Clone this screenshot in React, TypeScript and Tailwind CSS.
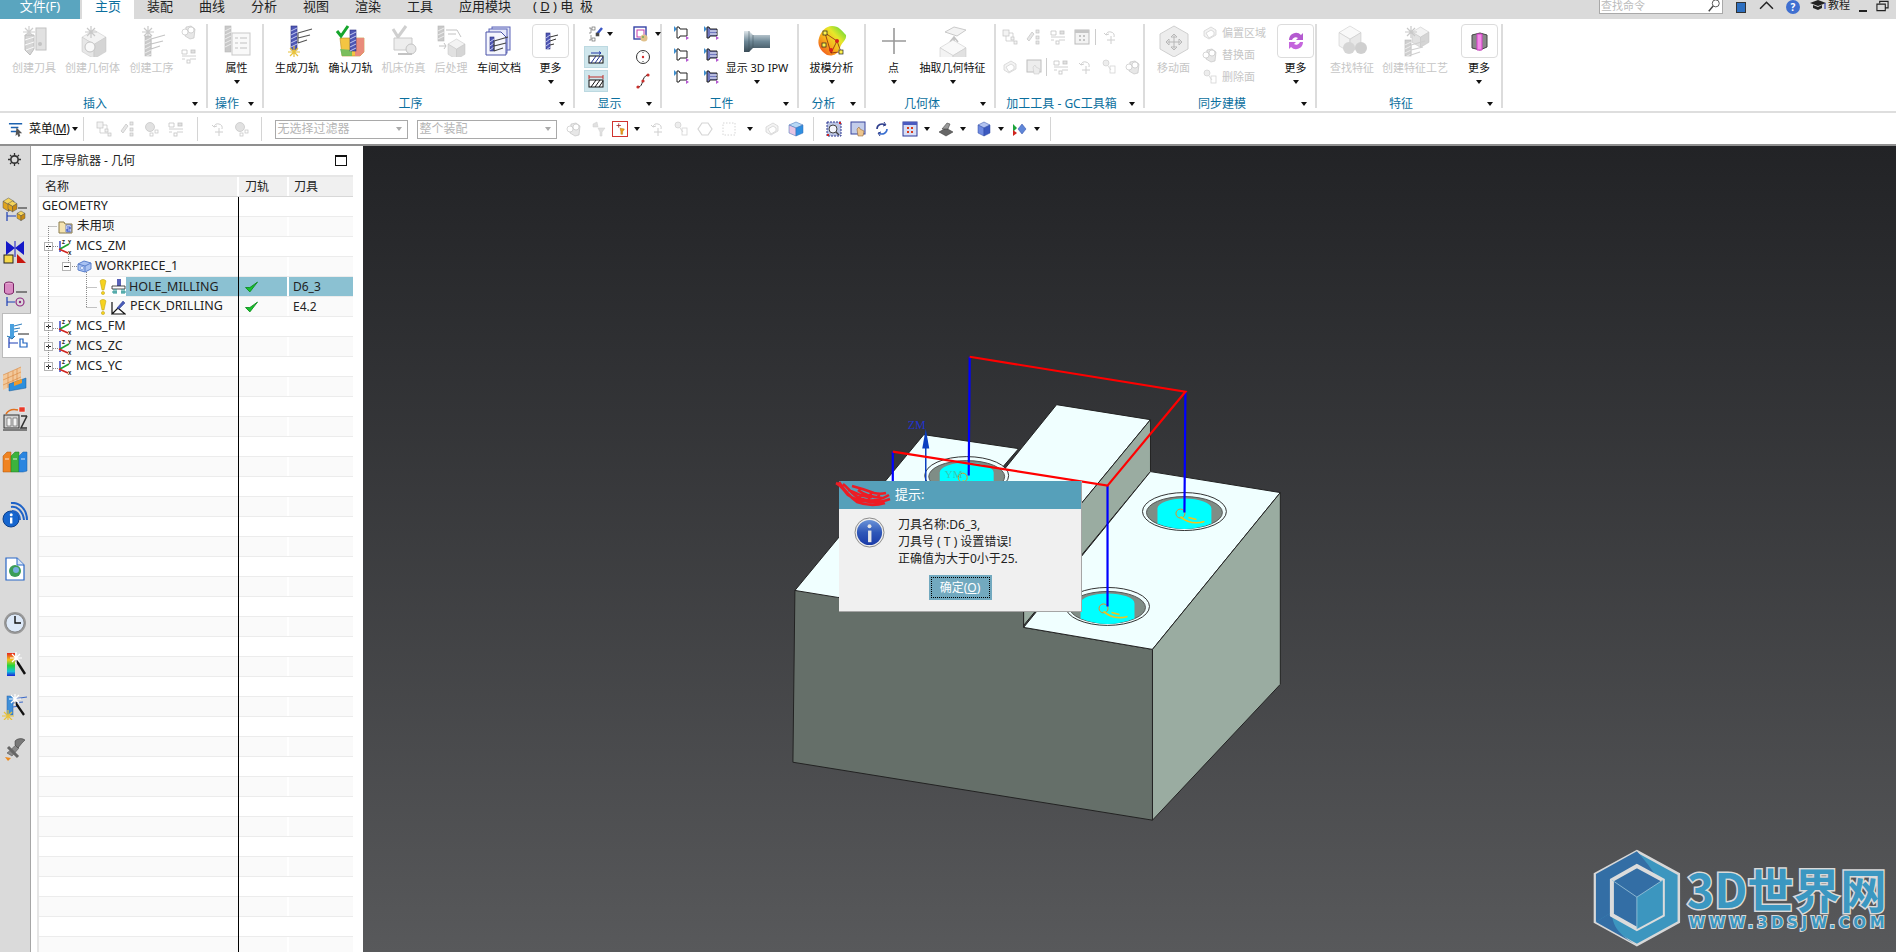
import React from "react";
import clsx from "clsx";

/* ---------- small drawing helpers ---------- */

const Tri = ({ className }: { className?: string }) => (
  <span className={clsx("inline-block w-0 h-0 border-x-[3.5px] border-x-transparent border-t-[4px] border-t-[#111]", className)} />
);

const Ico = ({ children, off, className, view = "0 0 32 32" }: { children: React.ReactNode; off?: boolean; className?: string; view?: string }) => (
  <svg viewBox={view} className={clsx(className ?? "w-[32px] h-[32px]", off && "opacity-35 grayscale")}>
    {children}
  </svg>
);

const Flute = ({ x, y, w = 6, h = 20, c = "#4f57b5" }: { x: number; y: number; w?: number; h?: number; c?: string }) => (
  <g>
    <rect x={x} y={y} width={w} height={h} fill={c} stroke="#2c3180" strokeWidth="0.6" />
    {[3, 7, 11, 15, 19].filter((d) => d < h).map((d) => (
      <path key={d} d={`M${x} ${y + d + 2}l${w} -3`} stroke="#cfd4f5" strokeWidth="0.9" />
    ))}
  </g>
);

const Wings = ({ x, y, c = "#555" }: { x: number; y: number; c?: string }) => (
  <path d={`M${x} ${y + 3}l14 -4M${x} ${y + 8}l12 -3M${x} ${y + 13}l9 -3M${x} ${y + 3}v10`} stroke={c} strokeWidth="1.1" fill="none" />
);

const Burst = ({ x, y, c = "#999" }: { x: number; y: number; c?: string }) => (
  <path d={`M${x} ${y - 6}v12M${x - 6} ${y}h12M${x - 4} ${y - 4}l8 8M${x - 4} ${y + 4}l8 -8`} stroke={c} strokeWidth="1.2" />
);

const Box = ({ x, y, s = 10, f = "#bbb", t = "#ddd", r = "#999" }: { x: number; y: number; s?: number; f?: string; t?: string; r?: string }) => (
  <g stroke="#555" strokeWidth="0.5">
    <path d={`M${x} ${y + s * 0.3}l${s * 0.5} -${s * 0.3}l${s * 0.5} ${s * 0.3}l-${s * 0.5} ${s * 0.3}z`} fill={t} />
    <path d={`M${x} ${y + s * 0.3}v${s * 0.6}l${s * 0.5} ${s * 0.3}v-${s * 0.6}z`} fill={f} />
    <path d={`M${x + s} ${y + s * 0.3}v${s * 0.6}l-${s * 0.5} ${s * 0.3}v-${s * 0.6}z`} fill={r} />
  </g>
);

const IcoCreateTool = () => (
  <Ico off>
    <Burst x={11} y={7} c="#777" />
    <path d="M7 10h9v14l-4 6-5-5z" fill="#888" stroke="#444" />
    <path d="M7 15l9-3M7 20l9-3M8 25l8-3" stroke="#eee" />
    <rect x="18" y="3" width="10" height="22" fill="#aaa" stroke="#555" />
    <circle cx="22" cy="19" r="2" fill="#555" />
  </Ico>
);
const IcoCreateGeom = () => (
  <Ico off>
    <Box x={5} y={5} s={24} f="#bbb" t="#ddd" r="#888" />
    <Burst x={14} y={7} c="#666" />
    <circle cx="13" cy="22" r="5" fill="#eee" stroke="#555" />
  </Ico>
);
const IcoCreateOp = () => (
  <Ico off>
    <Burst x={12} y={7} c="#666" />
    <Flute x={9} y={11} c="#666" />
    <Wings x={15} y={11} c="#555" />
  </Ico>
);
const IcoProps = () => (
  <Ico off>
    <Flute x={4} y={1} h={26} c="#666" />
    <rect x="11" y="8" width="18" height="22" fill="#eee" stroke="#666" />
    <path d="M14 13h3M19 13h7M14 18h3M19 18h7M14 23h3M19 23h7" stroke="#555" />
  </Ico>
);
const IcoGenerate = () => (
  <Ico>
    <Flute x={10} y={1} h={24} />
    <Wings x={17} y={5} c="#555" />
    <Burst x={13} y={27} c="#e8c23a" />
  </Ico>
);
const IcoVerify = () => (
  <Ico>
    <path d="M5 13h24v14l-4 4H7z" fill="#f4c542" stroke="#b98a1c" strokeWidth="0.6" />
    <path d="M20 13h9v14l-4 4h-5z" fill="#e98b7a" />
    <path d="M5 24l12 1v6H7z" fill="#5dbb63" opacity="0.8" />
    <Flute x={15} y={5} h={21} />
    <path d="M2 6l4 5 7-10" stroke="#16a52c" strokeWidth="3" fill="none" />
  </Ico>
);
const IcoMachine = () => (
  <Ico off>
    <path d="M5 4l5 8 8-11" stroke="#777" strokeWidth="3" fill="none" />
    <path d="M6 13h18v12H6z" fill="#ccc" stroke="#666" />
    <circle cx="23" cy="24" r="5" fill="#bbb" stroke="#555" />
    <path d="M10 29h14" stroke="#555" strokeWidth="2" />
  </Ico>
);
const IcoPost = () => (
  <Ico off>
    <Flute x={3} y={1} h={15} c="#666" />
    <path d="M11 5h11l4 7M13 9h8" stroke="#555" fill="none" />
    <path d="M4 21h7l-2-3M9 24l2-3" stroke="#555" fill="none" />
    <Box x={13} y={14} s={17} f="#aaa" t="#ddd" r="#888" />
  </Ico>
);
const IcoDocs = () => (
  <Ico>
    <rect x="9" y="2" width="18" height="23" fill="#dfe3f6" stroke="#5a63b8" />
    <rect x="6" y="4" width="18" height="24" fill="#e7eaf9" stroke="#5a63b8" />
    <path d="M3 7h15l5 5v18H3z" fill="#f5f6fd" stroke="#4a52a8" />
    <Flute x={7} y={12} w={4} h={14} />
    <Wings x={11} y={13} c="#444" />
  </Ico>
);
const IcoMoreMill = () => (
  <Ico>
    <Flute x={11} y={8} w={4} h={16} />
    <path d="M15 12l8-2M15 16l6-2M15 20l4-1" stroke="#333" />
  </Ico>
);
const IcoPurple = () => (
  <Ico>
    <path d="M9 15a7 7 0 0 1 12-5l2-2v7h-7l2-2a4 4 0 0 0-6 2z" fill="#b45ad0" />
    <path d="M23 17a7 7 0 0 1-12 5l-2 2v-7h7l-2 2a4 4 0 0 0 6-2z" fill="#c566dd" />
  </Ico>
);
const IcoPinkBox = () => (
  <Ico>
    <path d="M9 10l8-2 7 2v12l-7 3-8-2z" fill="#888" stroke="#444" />
    <path d="M14 9h5v16h-5z" fill="#f48ce8" stroke="#d13fc5" />
  </Ico>
);
const IcoIpw = () => (
  <Ico view="0 0 28 22" className="w-[28px] h-[22px]">
    <defs>
      <linearGradient id="steel" x1="0" y1="0" x2="0" y2="1">
        <stop offset="0" stopColor="#dfe6ea" />
        <stop offset="0.5" stopColor="#6d8796" />
        <stop offset="1" stopColor="#3a4c57" />
      </linearGradient>
    </defs>
    <path d="M1 1h5l4 4h17v13H10l-4 4H1z" fill="url(#steel)" />
    <path d="M6 1v21M10 5v13" stroke="#3a4c57" strokeWidth="0.5" />
  </Ico>
);
const IcoDraft = () => (
  <Ico view="0 0 32 32" className="w-[34px] h-[32px]">
    <defs>
      <linearGradient id="rainbow" x1="0" y1="1" x2="1" y2="0">
        <stop offset="0" stopColor="#f03a1e" />
        <stop offset="0.4" stopColor="#f7b21c" />
        <stop offset="0.65" stopColor="#e7e62a" />
        <stop offset="1" stopColor="#3ed43d" />
      </linearGradient>
    </defs>
    <path d="M16 1c7 0 9 4 14 9 1 5-5 8-6 13-3 8-9 8-13 7C4 26 1 19 3 13 5 6 10 1 16 1z" fill="url(#rainbow)" />
    <path d="M9 8l6 20M9 8l12 8-6 12M15 28l8-1M21 16l4 11" stroke="#7a1210" fill="none" strokeWidth="0.7" />
    <rect x="7" y="6" width="4" height="4" fill="#fff24d" stroke="#222" strokeWidth="0.7" />
    <rect x="6" y="18" width="4" height="4" fill="#fff24d" stroke="#222" strokeWidth="0.7" />
    <rect x="23" y="25" width="4" height="4" fill="#fff24d" stroke="#222" strokeWidth="0.7" />
    <circle cx="21" cy="16" r="2" fill="#d6221c" />
    <circle cx="15" cy="25" r="2" fill="#d6221c" />
  </Ico>
);
const IcoPoint = () => (
  <Ico>
    <path d="M16 3v26M4 16h24" stroke="#999" strokeWidth="1.6" />
  </Ico>
);
const IcoExtract = () => (
  <Ico off>
    <path d="M8 7l9-5 12 3-9 6z" fill="#ddd" stroke="#666" />
    <path d="M17 26V13M13 17l4-5 4 5" stroke="#555" strokeWidth="1.6" fill="none" />
    <Box x={3} y={15} s={26} f="#ddd" t="#eee" r="#aaa" />
  </Ico>
);
const IcoMoveFace = () => (
  <Ico off>
    <path d="M16 1l14 8v15l-14 8-14-8V9z" fill="#ccc" stroke="#777" />
    <path d="M16 9v16M8 17h16M16 9l-3 3h6zM16 25l-3-3h6zM8 17l3-3v6zM24 17l-3-3v6z" stroke="#333" fill="#fff" />
  </Ico>
);
const IcoFind = () => (
  <Ico off>
    <Box x={3} y={1} s={22} f="#ddd" t="#eee" r="#bbb" />
    <circle cx="13" cy="23" r="6" fill="#888" />
    <circle cx="25" cy="23" r="6" fill="#777" />
  </Ico>
);
const IcoFeatProc = () => (
  <Ico off>
    <Box x={13} y={2} s={17} f="#aaa" t="#ddd" r="#888" />
    <Burst x={12} y={7} c="#666" />
    <Flute x={6} y={15} h={16} c="#777" />
    <Wings x={12} y={17} c="#777" />
  </Ico>
);

const Small = ({ kind, off }: { kind: number; off?: boolean }) => (
  <Ico off={off} view="0 0 16 16" className="w-[16px] h-[16px]">
    {kind === 0 && (
      <g stroke="#555" fill="#ddd" strokeWidth="0.7">
        <rect x="1" y="1" width="6" height="6" />
        <rect x="9" y="8" width="3" height="3" />
        <rect x="12" y="12" width="3" height="3" />
        <path d="M4 7v5h8M7 4h4v4" fill="none" />
      </g>
    )}
    {kind === 1 && (
      <g stroke="#555" fill="#bbb" strokeWidth="0.7">
        <path d="M1 10l5-7 2 2-5 7z" />
        <rect x="10" y="1" width="3" height="3" />
        <rect x="10" y="7" width="3" height="3" />
        <rect x="10" y="12" width="3" height="3" />
      </g>
    )}
    {kind === 2 && (
      <g stroke="#555" fill="#aaa" strokeWidth="0.7">
        <circle cx="6" cy="6" r="4.5" />
        <rect x="11" y="9" width="3" height="3" fill="#fff" />
        <rect x="6" y="12" width="3" height="3" fill="#fff" />
      </g>
    )}
    {kind === 3 && (
      <g stroke="#555" fill="none" strokeWidth="0.8">
        <path d="M1 2h5v4H1zM1 8h14M1 11h3M9 11h6" />
        <rect x="10" y="2" width="4" height="3" fill="#aaa" />
        <rect x="6" y="12" width="3" height="3" />
      </g>
    )}
    {kind === 4 && (
      <g fill="#888" stroke="#444" strokeWidth="0.6">
        <path d="M5 3l5-1 4 3-1 9-4 1-5-3z" fill="#bbb" />
        <circle cx="4" cy="8" r="3" fill="#fff" />
        <circle cx="10" cy="6" r="3" fill="#fff" />
      </g>
    )}
    {kind === 5 && (
      <g>
        <path d="M7 1l1 5H3v-3zM8 7l7 0-3 4v4h-2v-4z" fill="#aaa" stroke="#777" strokeWidth="0.5" />
      </g>
    )}
    {kind === 6 && (
      <g>
        <path d="M8 7L13 8l-2 3v3H9v-3z" fill="#f2a21c" stroke="#a86a08" strokeWidth="0.5" />
        <path d="M4 4h5M6.500 1.500v5" stroke="#a33" strokeWidth="1" />
      </g>
    )}
    {kind === 7 && <path d="M4 6a4 4 0 0 1 8 2M4 6l-2-2M4 6l3-1M9 7v8M5 11h8" stroke="#777" fill="none" />}
    {kind === 8 && (
      <g stroke="#777" fill="#ccc" strokeWidth="0.7">
        <circle cx="5" cy="4" r="3" />
        <rect x="9" y="7" width="5" height="7" fill="none" />
        <path d="M7 7l3 4" />
      </g>
    )}
    {kind === 9 && <path d="M5 2h6l4 6-4 6H5L1 8z" fill="#fff" stroke="#888" strokeWidth="1.2" />}
    {kind === 10 && <rect x="2" y="2" width="12" height="12" fill="none" stroke="#888" strokeDasharray="1.5 1.5" />}
    {kind === 11 && (
      <g strokeWidth="0.7" stroke="#777">
        <path d="M2 6l7-4 5 3v5l-7 4-5-3z" fill="#ddd" />
        <path d="M4 8l5-3 3 2v3l-5 3z" fill="#fff" />
      </g>
    )}
    {kind === 12 && (
      <g stroke="#3b6db5" strokeWidth="0.5">
        <path d="M1 4l7-3 7 3-7 3z" fill="#b7d8f5" />
        <path d="M1 4v8l7 3V7z" fill="#e6c5e3" />
        <path d="M15 4v8l-7 3V7z" fill="#2f8fe0" />
      </g>
    )}
    {kind === 13 && (
      <g>
        <rect x="1" y="1" width="14" height="14" fill="#b9c3e2" stroke="#2b358f" strokeDasharray="2 1" />
        <circle cx="7" cy="8" r="4" fill="#f2f4fb" stroke="#444" />
        <path d="M10 11l3 3" stroke="#444" strokeWidth="1.4" />
        <rect x="13" y="1" width="2" height="2" fill="#d02020" />
        <rect x="1" y="13" width="2" height="2" fill="#d02020" />
      </g>
    )}
    {kind === 14 && (
      <g>
        <rect x="1" y="1" width="14" height="12" fill="#c3cdea" stroke="#39449c" />
        <path d="M7 8l1 7h5l1-5-4-2-1-2z" fill="#eec68d" stroke="#84562a" strokeWidth="0.5" />
      </g>
    )}
    {kind === 15 && (
      <g fill="none" strokeWidth="1.6">
        <path d="M3 8a5 5 0 0 1 8-4" stroke="#2e3e8c" />
        <path d="M13 8a5 5 0 0 1-8 4" stroke="#3a6fd0" />
        <path d="M10 1l2 3-3 1M6 15l-2-3 3-1" stroke="#2e3e8c" strokeWidth="1" />
      </g>
    )}
    {kind === 16 && (
      <g>
        <rect x="1" y="1" width="14" height="14" fill="#d8def5" stroke="#2d3a9a" />
        <rect x="1" y="1" width="14" height="3" fill="#4a5ac0" />
        <path d="M5 6h2v2H5zM9 6h2v2H9zM5 10h2v2H5zM9 10h2v2H9z" fill="#d93a1a" />
      </g>
    )}
    {kind === 17 && (
      <g stroke="#333" strokeWidth="0.5">
        <path d="M1 11l7-4 7 4-7 4z" fill="#666" />
        <path d="M4 8l5-6 3 1-2 5z" fill="#999" />
      </g>
    )}
    {kind === 18 && (
      <g stroke="#2c4aa5" strokeWidth="0.5">
        <path d="M2 4l6-3 6 3-6 3z" fill="#b3c3f0" />
        <path d="M2 4v8l6 3V7z" fill="#6f8ae0" />
        <path d="M14 4v8l-6 3V7z" fill="#3c59c0" />
      </g>
    )}
    {kind === 19 && (
      <g>
        <path d="M7 8l4-5 4 5-4 5z" fill="#5f86d8" stroke="#2c4aa5" strokeWidth="0.5" />
        <path d="M2 3l4 4-4 4z" fill="#1da33a" />
        <path d="M2 9l4 3-4 3z" fill="#d0231d" />
      </g>
    )}
    {kind === 20 && (
      <g stroke="#555" strokeWidth="0.6" fill="none">
        <path d="M1 7h2M1 2h2v5M1 14h2V9" />
        <rect x="4" y="1" width="3" height="3" />
        <rect x="4" y="12" width="3" height="3" />
        <path d="M9 8l5-6" stroke="#3b57c5" strokeWidth="2.5" />
        <rect x="8" y="7" width="3" height="3" fill="#444" />
      </g>
    )}
    {kind === 21 && (
      <g>
        <rect x="1" y="1" width="12" height="12" fill="#fff" stroke="#3542a6" strokeWidth="1.4" />
        <rect x="4" y="4" width="7" height="7" fill="#fff" stroke="#c63ca8" />
        <circle cx="11" cy="12" r="3.500" fill="#e0c08a" />
        <circle cx="10" cy="11" r="0.8" fill="#2a9a3a" />
      </g>
    )}
    {kind === 22 && (
      <g>
        <circle cx="8" cy="8" r="6.500" fill="#fff" stroke="#333" />
        <circle cx="8" cy="8" r="1.2" fill="#cf2a2a" />
        <path d="M8 3v1M8 12v1" stroke="#333" />
      </g>
    )}
    {kind === 23 && (
      <g>
        <path d="M3 14c6 0 3-11 10-12" stroke="#222" fill="none" />
        <circle cx="3" cy="14" r="1.6" fill="#c9302c" />
        <circle cx="13" cy="2" r="1.6" fill="#c9302c" />
        <circle cx="8" cy="8" r="1.6" fill="#c9302c" />
      </g>
    )}
  </Ico>
);

const ArrowBlank = ({ filled }: { filled?: boolean }) => (
  <Ico view="0 0 18 18" className="w-[18px] h-[18px]">
    <path d="M1 2l3 3-3 3z" fill="#3f8fd0" />
    <path d="M4 3h2l1 2h7v7H7l-1 2H4z" fill={filled ? "#7078c0" : "#fff"} stroke="#222" strokeWidth="1" />
    {filled && <path d="M7 7h7M7 10h7" stroke="#fff" />}
    <path d="M13 12l3 2-3 2z" fill="#b45ad0" />
  </Ico>
);

const Tool = ({ kind, off, className }: { kind: number; off?: boolean; className?: string }) => (
  <span className={clsx("flex w-[24px] justify-center", className)}>
    <Small kind={kind} off={off} />
  </span>
);

/* ---------- ribbon ---------- */

const Group = ({ title, width, children, noTri }: { title: string; width: string; children: React.ReactNode; noTri?: boolean }) => (
  <div className={clsx("flex flex-col mt-[5px] h-[84px] border-r-2 border-[#dcdcdc] shrink-0", width)}>
    <div className="relative flex flex-1">{children}</div>
    <div className="flex h-[13px] items-center translate-y-[2px]">
      <span className="flex-1 text-center text-[12px] leading-[14px] text-[#0b6f9e]">{title}</span>
      <span className="flex w-[10px] mr-[6px] justify-center">{!noTri && <Tri />}</span>
    </div>
  </div>
);

const Btn = ({ label, icon, width, off, arrow, boxed }: { label: string; icon: React.ReactNode; width: string; off?: boolean; arrow?: boolean; boxed?: boolean }) => (
  <div className={clsx("flex flex-col items-center shrink-0", width)}>
    <div className={clsx("flex h-[34px] items-center justify-center", boxed && "w-[37px] rounded-[4px] border border-[#dcdcdc]")}>{icon}</div>
    <span className={clsx("mt-[1px] h-[18px] whitespace-nowrap text-[11px] leading-[18px]", off ? "text-[#c6c6c6]" : "text-[#111]")}>{label}</span>
    {arrow && <Tri className="mt-[3px]" />}
  </div>
);

const MiniLabel = ({ kind, label }: { kind: number; label: string }) => (
  <div className="flex h-[22px] items-center gap-[4px]">
    <Small kind={kind} off />
    <span className="text-[11px] leading-[14px] text-[#c6c6c6]">{label}</span>
  </div>
);

const Ribbon = () => (
  <div className="flex h-[94px] bg-white border-b-2 border-[#dedede]">
    <Group title="插入" width="w-[208px]">
      <Btn width="w-[63px] pl-[5px]" label="创建刀具" off icon={<IcoCreateTool />} />
      <Btn width="w-[59px]" label="创建几何体" off icon={<IcoCreateGeom />} />
      <Btn width="w-[59px]" label="创建工序" off icon={<IcoCreateOp />} />
      <div className="flex flex-col gap-[8px] w-[20px]">
        <Small kind={4} off />
        <Small kind={3} off />
      </div>
    </Group>
    <Group title="操作" width="w-[56px]">
      <Btn width="w-full pl-[3px]" label="属性" arrow icon={<IcoProps />} />
    </Group>
    <Group title="工序" width="w-[311px]">
      <Btn width="w-[54px] ml-[6px]" label="生成刀轨" icon={<IcoGenerate />} />
      <Btn width="w-[53px]" label="确认刀轨" icon={<IcoVerify />} />
      <Btn width="w-[53px]" label="机床仿真" off icon={<IcoMachine />} />
      <Btn width="w-[42px]" label="后处理" off icon={<IcoPost />} />
      <Btn width="w-[54px]" label="车间文档" icon={<IcoDocs />} />
      <Btn width="w-[49px]" label="更多" arrow boxed icon={<IcoMoreMill />} />
    </Group>
    <Group title="显示" width="w-[87px]">
      <div className="grid grid-cols-[41px_38px] pl-[9px]">
        <div className="flex h-[19px] items-center gap-[3px] pl-[4px]">
          <Small kind={20} />
          <Tri />
        </div>
        <div className="flex h-[19px] items-center gap-[6px] pl-[8px]">
          <Small kind={21} />
          <Tri />
        </div>
        <div className="flex h-[22px] w-[24px] items-center justify-center bg-[#cfe6ec] border border-[#bcd9e1]">
          <Ico view="0 0 16 16" className="w-[16px] h-[16px]">
            <path d="M3 4h10M11 2.500L13 4l-2 1.500" stroke="#2238a8" fill="none" />
            <rect x="1" y="7" width="14" height="7" fill="#fff" stroke="#111" />
            <path d="M3 14l5-7M7 14l5-7M11 14l4-6" stroke="#1f2f8c" />
          </Ico>
        </div>
        <div className="flex h-[22px] items-center pl-[10px]">
          <Small kind={22} />
        </div>
        <div className="flex h-[22px] w-[24px] items-center justify-center bg-[#cfe6ec] border border-[#bcd9e1]">
          <Ico view="0 0 16 16" className="w-[16px] h-[16px]">
            <path d="M1 2v4M15 2v4M1 4h14" stroke="#c0302c" />
            <rect x="1" y="7" width="14" height="7" fill="#fff" stroke="#111" />
            <path d="M3 14l5-7M7 14l5-7M11 14l4-6" stroke="#111" />
          </Ico>
        </div>
        <div className="flex h-[22px] items-center pl-[10px]">
          <Small kind={23} />
        </div>
      </div>
    </Group>
    <Group title="工件" width="w-[137px]">
      <div className="grid grid-cols-2 gap-x-[9px] gap-y-[3px] pl-[11px] h-[63px] w-[62px] shrink-0">
        <ArrowBlank />
        <ArrowBlank filled />
        <ArrowBlank />
        <ArrowBlank filled />
        <ArrowBlank />
        <ArrowBlank filled />
      </div>
      <Btn width="w-[66px]" label="显示 3D IPW" arrow icon={<IcoIpw />} />
    </Group>
    <Group title="分析" width="w-[67px]">
      <Btn width="w-full" label="拔模分析" arrow icon={<IcoDraft />} />
    </Group>
    <Group title="几何体" width="w-[130px]">
      <Btn width="w-[55px]" label="点" arrow icon={<IcoPoint />} />
      <Btn width="w-[63px]" label="抽取几何特征" arrow icon={<IcoExtract />} />
    </Group>
    <Group title="加工工具 - GC工具箱" width="w-[149px]">
      <div className="flex flex-col pl-[2px] pt-[3px] gap-[10px]">
        <div className="flex h-[20px] items-center">
          <Tool kind={0} off />
          <Tool kind={1} off />
          <Tool kind={3} off />
          <Tool kind={16} off />
          <span className="ml-[1px] h-[16px] border-l border-[#ccc]" />
          <Tool kind={7} off className="w-[28px]" />
        </div>
        <div className="flex h-[20px] items-center">
          <Tool kind={11} off />
          <Tool kind={14} off />
          <span className="h-[18px] border-l border-[#ccc]" />
          <Tool kind={3} off className="ml-[2px]" />
          <Tool kind={7} off />
          <Tool kind={8} off />
          <Tool kind={4} off />
        </div>
      </div>
    </Group>
    <Group title="同步建模" width="w-[172px]">
      <Btn width="w-[57px]" label="移动面" off icon={<IcoMoveFace />} />
      <div className="flex flex-col w-[75px] -mt-[2px]">
        <MiniLabel kind={11} label="偏置区域" />
        <MiniLabel kind={4} label="替换面" />
        <MiniLabel kind={8} label="删除面" />
      </div>
      <Btn width="w-[39px]" label="更多" arrow boxed icon={<IcoPurple />} />
    </Group>
    <Group title="特征" width="w-[186px]">
      <Btn width="w-[56px] ml-[7px]" label="查找特征" off icon={<IcoFind />} />
      <Btn width="w-[70px]" label="创建特征工艺" off icon={<IcoFeatProc />} />
      <Btn width="w-[38px] ml-[10px]" label="更多" arrow boxed icon={<IcoPinkBox />} />
    </Group>
  </div>
);

/* ---------- top bar ---------- */

const tabs = ["装配", "曲线", "分析", "视图", "渲染", "工具"];

const TopBar = () => (
  <div className="flex h-[19px] bg-[#dadada] overflow-hidden text-[13px] leading-[13px] text-[#222]">
    <div className="flex h-full w-[80px] justify-center bg-[#5aa5bf] text-white">文件(F)</div>
    <div className="ml-[2px] flex h-full w-[52px] justify-center bg-white text-[#0b6f9e]">主页</div>
    {tabs.map((t) => (
      <div key={t} className="flex w-[52px] justify-center">{t}</div>
    ))}
    <div className="flex w-[78px] justify-center">应用模块</div>
    <div className="flex w-[78px] justify-center whitespace-pre">( <u>D</u> ) 电  极</div>
    <div className="ml-auto flex items-start">
      <div className="flex h-[14px] w-[124px] items-start justify-between border border-t-0 border-[#a9a9a9] bg-white px-[1px] text-[11px] leading-[11px] text-[#bbb]">
        查找命令
        <Ico view="0 0 16 16" className="w-[14px] h-[14px] -mt-[1px]">
          <circle cx="10" cy="5" r="4" fill="none" stroke="#444" />
          <path d="M7 8l-5 6" stroke="#444" strokeWidth="1.6" />
        </Ico>
      </div>
      <div className="ml-[10px] flex h-[14px] w-[16px] items-center justify-center">
        <span className="h-[11px] w-[10px] border border-[#333] bg-[#2d6fc0]" />
      </div>
      <Ico view="0 0 14 10" className="ml-[10px] w-[15px] h-[11px]">
        <path d="M1 8l6-6 6 6" fill="none" stroke="#222" strokeWidth="1.4" />
      </Ico>
      <span className="ml-[12px] flex h-[14px] w-[14px] items-center justify-center rounded-full bg-[#3f6fd0] text-[10px] leading-[13px] font-bold text-white">?</span>
      <Ico view="0 0 16 10" className="ml-[10px] w-[16px] h-[10px]">
        <path d="M0 3l8-3 8 3-8 3z" fill="#222" />
        <path d="M3 5v3l5 2 4-2V5l-4 2z" fill="#222" />
        <path d="M15 3v6" stroke="#1f2fb0" />
      </Ico>
      <span className="ml-[2px] text-[11px] leading-[10px]">教程</span>
      <span className="ml-[9px] mt-[10px] h-[2px] w-[8px] bg-[#222]" />
      <Ico view="0 0 14 12" className="ml-[9px] mr-[7px] w-[13px] h-[12px]">
        <path d="M4 3V1h9v7h-3M1 4h9v7H1z" fill="none" stroke="#222" strokeWidth="1.2" />
      </Ico>
    </div>
  </div>
);

/* ---------- toolbar under the ribbon ---------- */

const Sep = ({ className }: { className?: string }) => <span className={clsx("h-[24px] border-l border-[#d4d4d4]", className)} />;

const Combo = ({ text, width, className }: { text: string; width: string; className?: string }) => (
  <div className={clsx("flex h-[19px] items-center justify-between border border-[#a9a9a9] px-[2px] text-[12px] text-[#b5b5b5]", width, className)}>
    {text}
    <Tri className="mr-[3px] border-t-[#aaa]" />
  </div>
);

const Toolbar = () => (
  <div className="flex h-[31px] items-center bg-white pt-[1px]">
    <Ico view="0 0 18 18" className="ml-[8px] w-[17px] h-[17px]">
      <path d="M1 3h14M3 7h8M3 11h8" stroke="#1d62b0" strokeWidth="1.6" />
      <path d="M9 7l6 6-3 0 1 3-2 1-1-3-2 2z" fill="#555" />
    </Ico>
    <span className="ml-[4px] text-[12px] tracking-[-0.3px] text-[#111]">菜单(<u>M</u>)</span>
    <Tri className="ml-[2px]" />
    <Sep className="ml-[5px]" />
    <Tool kind={0} off className="ml-[8px]" />
    <Tool kind={1} off />
    <Tool kind={2} off />
    <Tool kind={3} off />
    <Sep className="ml-[9px]" />
    <Tool kind={7} off className="ml-[8px]" />
    <Tool kind={2} off />
    <Sep className="ml-[7px]" />
    <Combo text="无选择过滤器" width="w-[133px]" className="ml-[13px]" />
    <Combo text="整个装配" width="w-[140px]" className="ml-[9px]" />
    <Tool kind={4} off className="ml-[5px]" />
    <Tool kind={5} off />
    <span className="flex w-[20px] justify-center">
      <span className="flex h-[16px] w-[16px] items-center justify-center border border-[#d0332f]">
        <Small kind={6} />
      </span>
    </span>
    <Tri className="ml-[4px]" />
    <Tool kind={7} off className="ml-[5px]" />
    <Tool kind={8} off />
    <Tool kind={9} off />
    <Tool kind={10} off />
    <Tri className="ml-[6px]" />
    <Tool kind={11} off className="ml-[7px]" />
    <Tool kind={12} />
    <Sep className="ml-[5px]" />
    <Tool kind={13} className="ml-[8px]" />
    <Tool kind={14} />
    <Tool kind={15} />
    <Tool kind={16} className="ml-[4px]" />
    <Tri className="ml-[2px]" />
    <Tool kind={17} className="ml-[4px]" />
    <Tri className="ml-[2px]" />
    <Tool kind={18} className="ml-[6px]" />
    <Tri className="ml-[2px]" />
    <Tool kind={19} className="ml-[3px]" />
    <Tri className="ml-[3px]" />
    <Sep className="ml-[10px]" />
  </div>
);

/* ---------- left rail ---------- */

const RailIcon = ({ n }: { n: number }) => (
  <Ico view="0 0 26 26" className="w-[26px] h-[26px]">
    {n === 0 && (
      <g>
        <Box x={1} y={1} s={11} f="#e0a41c" t="#f5d45a" r="#c98a10" />
        <Box x={6} y={4} s={9} f="#e0a41c" t="#f5d45a" r="#c98a10" />
        <Box x={15} y={14} s={8} f="#e0a41c" t="#f5d45a" r="#c98a10" />
        <path d="M5 15v9M5 19h9" stroke="#1d3fb5" strokeWidth="1.2" />
        <path d="M16 11h9" stroke="#222" />
      </g>
    )}
    {n === 1 && (
      <g>
        <path d="M4 3l9 7-9 7zM22 3l-9 7 9 7z" fill="#1518c8" />
        <path d="M13 3v16" stroke="#1518c8" />
        <rect x="2" y="17" width="9" height="8" fill="#f6d94a" stroke="#222" />
        <path d="M15 25v-9l9 9z" fill="#c8170f" />
      </g>
    )}
    {n === 2 && (
      <g>
        <ellipse cx="7" cy="3" rx="4.500" ry="2" fill="#e6a8d0" stroke="#7a2566" />
        <path d="M2.500 3v8c0 3 9 3 9 0V3" fill="#d88ac2" stroke="#7a2566" />
        <path d="M14 11h11" stroke="#222" />
        <path d="M5 16v9M5 21h8" stroke="#1d3fb5" strokeWidth="1.2" />
        <circle cx="18" cy="21" r="4" fill="none" stroke="#8e2a82" strokeWidth="1.2" />
        <circle cx="18" cy="21" r="1.2" fill="#8e2a82" />
      </g>
    )}
    {n === 3 && (
      <g>
        <rect x="6" y="1" width="4" height="12" fill="#4aa1e0" />
        <path d="M3 13l5 3 3-3" fill="#4aa1e0" stroke="#2a6ea8" />
        <path d="M10 3l8-2M10 6l6-1M10 9l4-1" stroke="#2d7dbd" />
        <path d="M14 11h11" stroke="#222" />
        <path d="M5 15v10M5 20h9" stroke="#1d3fb5" strokeWidth="1.2" />
        <path d="M16 16h3v4h4v4h-7z" fill="none" stroke="#1d62c0" strokeWidth="1.2" />
      </g>
    )}
    {n === 4 && (
      <g>
        <path d="M1 9l18-8v14L1 24z" fill="#f2c89a" />
        <path d="M1 9l18-8M1 14l18-8M1 19l18-8M6 7v15M11 5v15M15 3v15" stroke="#d8843a" strokeWidth="0.6" />
        <path d="M7 18l17-6v10l-17 3z" fill="#2d8fdc" stroke="#185a96" strokeWidth="0.5" />
        <path d="M12 16l8-3v4l-8 3z" fill="#f09a2a" />
      </g>
    )}
    {n === 5 && (
      <g>
        <rect x="2" y="9" width="15" height="13" fill="#d0d0d0" stroke="#333" />
        <path d="M5 12h4v8H5zM11 12h4v8h-4z" fill="#f4f4f4" stroke="#555" strokeWidth="0.6" />
        <path d="M4 8c3-5 8-5 12-4" stroke="#e0701c" strokeWidth="1.5" fill="none" />
        <rect x="17" y="1" width="6" height="5" fill="#e83a2a" stroke="#fff" strokeWidth="0.5" />
        <path d="M19 10h6M25 10l-6 12h6" stroke="#333" strokeWidth="1.6" fill="none" />
        <path d="M1 24h24" stroke="#555" strokeWidth="1.4" />
      </g>
    )}
    {n === 6 && (
      <g>
        <path d="M1 7l4-4h4v20H1z" fill="#ef8321" stroke="#a9560f" strokeWidth="0.5" />
        <path d="M9 7l4-4h4v20H9z" fill="#3cb33c" stroke="#1c7a1c" strokeWidth="0.5" />
        <path d="M17 7l4-4h4v19l-4 1h-4z" fill="#2a85e0" stroke="#155ca5" strokeWidth="0.5" />
        <path d="M3 10h4M11 10h4M19 10h4" stroke="#fff" strokeWidth="0.8" />
      </g>
    )}
    {n === 7 && (
      <g>
        <circle cx="9" cy="17" r="8" fill="#1666cf" stroke="#0d3f88" />
        <rect x="8" y="15.500" width="2.400" height="6" fill="#fff" />
        <circle cx="9.200" cy="12.800" r="1.500" fill="#fff" />
        <path d="M9 5c6-1 12 4 13 13M9 1c9-1 16 7 16 17M10 9c5 0 8 4 8 9" fill="none" stroke="#1f63c7" strokeWidth="2" />
      </g>
    )}
    {n === 8 && (
      <g>
        <path d="M4 2h11l7 7v15H4z" fill="#fff" stroke="#2966c5" strokeWidth="1.2" />
        <path d="M15 2v7h7" fill="#d9e6f7" stroke="#2966c5" />
        <circle cx="13" cy="15" r="6" fill="#3b9d58" />
        <circle cx="14" cy="14" r="3" fill="#76aee0" />
      </g>
    )}
    {n === 9 && (
      <g>
        <circle cx="13" cy="13" r="11" fill="#9a9a9a" />
        <circle cx="13" cy="13" r="9" fill="#dde9f8" stroke="#666" strokeWidth="0.6" />
        <path d="M13 6v7h6" stroke="#111" strokeWidth="1.4" fill="none" />
      </g>
    )}
    {n === 10 && (
      <g>
        <defs>
          <linearGradient id="spec" x1="0" y1="0" x2="0" y2="1">
            <stop offset="0" stopColor="#e6261f" />
            <stop offset="0.3" stopColor="#f2c41f" />
            <stop offset="0.55" stopColor="#22d63a" />
            <stop offset="0.8" stopColor="#16c2d8" />
            <stop offset="1" stopColor="#1a22d8" />
          </linearGradient>
        </defs>
        <rect x="5" y="1" width="8" height="23" fill="url(#spec)" />
        <path d="M14 8l9 14" stroke="#111" strokeWidth="2.400" />
        <Burst x={14} y={6} c="#fff" />
      </g>
    )}
    {n === 11 && (
      <g>
        <rect x="5" y="2" width="6" height="19" fill="#3f8fd8" stroke="#2a60a8" strokeWidth="0.5" />
        <path d="M11 5l14-2M11 9l10-1M11 13l6-1" stroke="#3a68c8" strokeWidth="1.2" />
        <Burst x={6} y={22} c="#e8c23a" />
        <path d="M13 8l9 13" stroke="#111" strokeWidth="2.200" />
        <Burst x={13} y={5} c="#fff" />
      </g>
    )}
    {n === 12 && (
      <g>
        <path d="M5 17c3-2 6-6 9-8l3 3-7 8z" fill="#888" stroke="#444" strokeWidth="0.5" />
        <path d="M13 5c3-3 7-3 10-1l-3 3-4 5-3-3z" fill="#777" stroke="#333" strokeWidth="0.5" />
        <path d="M6 11l10 10" stroke="#666" strokeWidth="3" />
        <path d="M3 21l6 1-3 3z" fill="#ee8a1c" />
      </g>
    )}
  </Ico>
);

const railItems = [
  { n: 0, cls: "mt-[21px] h-[34px]" },
  { n: 1, cls: "mt-[7px] h-[34px]" },
  { n: 2, cls: "mt-[9px] h-[34px]" },
  { n: 3, cls: "mt-[2px] h-[45px] ml-[2px] -mr-[1px] z-10 bg-white border border-r-0 border-[#bbb] relative" },
  { n: 4, cls: "mt-[4px] h-[34px]" },
  { n: 5, cls: "mt-[6px] h-[34px]" },
  { n: 6, cls: "mt-[9px] h-[34px]" },
  { n: 7, cls: "mt-[19px] h-[34px]" },
  { n: 8, cls: "mt-[20px] h-[34px]" },
  { n: 9, cls: "mt-[20px] h-[34px]" },
  { n: 10, cls: "mt-[8px] h-[34px]" },
  { n: 11, cls: "mt-[8px] h-[34px]" },
  { n: 12, cls: "mt-[8px] h-[34px]" },
];

const Rail = () => (
  <div className="flex w-[31px] shrink-0 flex-col bg-[#dadada] border-r border-[#a6a6a6]">
    <div className="flex h-[26px] items-center justify-center -translate-x-[1px]">
      <Ico view="0 0 16 16" className="w-[13px] h-[13px]">
        <circle cx="8" cy="8" r="4.500" fill="none" stroke="#333" strokeWidth="2" />
        <path d="M8 0v3M8 13v3M0 8h3M13 8h3M2.500 2.500l2 2M11.500 11.500l2 2M2.500 13.500l2-2M11.500 4.500l2-2" stroke="#333" strokeWidth="1.6" />
      </Ico>
    </div>
    {railItems.map((it) => (
      <div key={it.n} className={clsx("flex items-center justify-center shrink-0", it.cls)}>
        <RailIcon n={it.n} />
      </div>
    ))}
  </div>
);

/* ---------- operation navigator ---------- */

const Csys = () => (
  <Ico view="0 0 16 16" className="w-[16px] h-[16px] shrink-0">
    <path d="M3 13V2" stroke="#1d2fc0" strokeWidth="1.3" />
    <path d="M3 10l9-5" stroke="#1fa32c" strokeWidth="1.6" />
    <path d="M2 10l9 4" stroke="#d0231d" strokeWidth="1.6" />
    <text x="5" y="5" fontSize="5" fontWeight="700" fill="#222">Z</text>
    <text x="11" y="5" fontSize="5" fontWeight="700" fill="#222">Y</text>
    <text x="11" y="16" fontSize="5" fontWeight="700" fill="#222">X</text>
  </Ico>
);

const Sign = ({ plus }: { plus?: boolean }) => (
  <span className="relative block h-[9px] w-[9px] shrink-0 border border-[#b4b4b4] bg-white">
    <span className="absolute left-[1px] top-[3px] h-[1px] w-[5px] bg-[#222]" />
    {plus && <span className="absolute left-[3px] top-[1px] h-[5px] w-[1px] bg-[#222]" />}
  </span>
);

const Bulb = () => (
  <Ico view="0 0 10 16" className="w-[10px] h-[16px] shrink-0">
    <path d="M2 2c1-2 5-2 6 0l-2 9H4z" fill="#f6d21f" stroke="#b59a10" strokeWidth="0.5" />
    <circle cx="5" cy="14" r="1.600" fill="#f6d21f" stroke="#b59a10" strokeWidth="0.5" />
  </Ico>
);

const Check = () => (
  <Ico view="0 0 13 11" className="w-[15px] h-[12px]">
    <path d="M1 6l4 4 7-9-7 5z" fill="#18c12e" stroke="#0d8c1e" strokeWidth="0.8" />
  </Ico>
);

const Folder = () => (
  <Ico view="0 0 15 14" className="w-[15px] h-[14px] shrink-0">
    <path d="M1 2h5l1 2h7v9H1z" fill="#f4e3b0" stroke="#8a7b4a" />
    <path d="M8 5h5v7H8z" fill="#fff" stroke="#1d3fc0" strokeWidth="0.6" />
    <path d="M9 7h3M12 7v2H9v2h3" stroke="#1d3fc0" fill="none" />
  </Ico>
);

const Workpiece = () => (
  <Ico view="0 0 15 13" className="w-[15px] h-[13px] shrink-0">
    <path d="M1 4l6-3 7 2v6l-6 3-7-2z" fill="#a9c2f2" stroke="#5a80cc" />
    <path d="M1 4l7 2 6-3M8 6v6" stroke="#5a80cc" fill="none" />
    <circle cx="5" cy="8" r="1.600" fill="#e8effd" stroke="#5a80cc" strokeWidth="0.5" />
  </Ico>
);

const HoleOp = () => (
  <Ico view="0 0 15 16" className="w-[15px] h-[16px] shrink-0">
    <rect x="6" y="0" width="4" height="8" fill="#5a63b8" />
    <path d="M1 7h13v3H1z" fill="#fff" stroke="#222" strokeWidth="0.8" />
    <path d="M3 10v5M5 10v5M11 10v5M13 10v5M1 13h5M10 13h5" stroke="#1c8f8f" />
  </Ico>
);

const PeckOp = () => (
  <Ico view="0 0 15 16" className="w-[15px] h-[16px] shrink-0">
    <path d="M1 15V3M1 15l6-6 7 6z" fill="#fff" stroke="#111" strokeWidth="1.2" />
    <path d="M6 9l6-7 2 2-6 6z" fill="#4a5cb8" stroke="#2a3a8a" strokeWidth="0.5" />
  </Ico>
);

type Row = { label?: string; pad?: string; lead?: React.ReactNode; gap?: string; sel?: boolean; tool?: string; done?: boolean };

const named: Row[] = [
  { label: "GEOMETRY", pad: "pl-[3px]" },
  { label: "未用项", pad: "pl-[19px]", lead: <Folder />, gap: "ml-[4px]" },
  { label: "MCS_ZM", pad: "pl-[5px]", lead: <><Sign /><span className="ml-[4px]"><Csys /></span></>, gap: "ml-[3px]" },
  { label: "WORKPIECE_1", pad: "pl-[23px]", lead: <><Sign /><span className="ml-[6px]"><Workpiece /></span></>, gap: "ml-[3px]" },
  { label: "HOLE_MILLING", pad: "pl-[59px]", lead: <><Bulb /><span className="ml-[3px]"><HoleOp /></span></>, sel: true, tool: "D6_3", done: true },
  { label: "PECK_DRILLING", pad: "pl-[59px]", lead: <><Bulb /><span className="ml-[3px]"><PeckOp /></span></>, gap: "ml-[4px]", tool: "E4.2", done: true },
  { label: "MCS_FM", pad: "pl-[5px]", lead: <><Sign plus /><span className="ml-[4px]"><Csys /></span></>, gap: "ml-[3px]" },
  { label: "MCS_ZC", pad: "pl-[5px]", lead: <><Sign plus /><span className="ml-[4px]"><Csys /></span></>, gap: "ml-[3px]" },
  { label: "MCS_YC", pad: "pl-[5px]", lead: <><Sign plus /><span className="ml-[4px]"><Csys /></span></>, gap: "ml-[3px]" },
];
const rows: Row[] = [...named, ...Array.from({ length: 30 }, () => ({}))];

const Navigator = () => (
  <div className="flex w-[332px] shrink-0 flex-col bg-white overflow-hidden">
    <div className="flex h-[29px] items-center justify-between pl-[10px] pr-[16px]">
      <span className="text-[12px] text-[#222]">工序导航器 - 几何</span>
      <span className="h-[11px] w-[12px] border border-[#111] border-t-2" />
    </div>
    <div className="ml-[6px] w-[316px] border-l-2 border-t-2 border-[#e6e6e6] flex-1 overflow-hidden">
      <div className="flex h-[20px] bg-[#f0f0f0] text-[12px] leading-[20px] text-[#222] border-b border-[#d8d8d8]">
        <span className="w-[200px] pl-[6px] border-r-2 border-white">名称</span>
        <span className="w-[50px] pl-[6px] border-r-2 border-white">刀轨</span>
        <span className="flex-1 pl-[5px]">刀具</span>
      </div>
      <div className="relative">
        {rows.map((r, i) => (
          <div key={i} className={clsx("flex h-[20px] border-b border-[#ececec]", i % 2 ? "bg-[#fafafa]" : "bg-white")}>
            <div className={clsx("flex w-[200px] items-center text-[12.5px] text-[#222]", r.pad)}>
              {r.lead}
              {r.label && (
                r.sel
                  ? <span className="flex-1 self-stretch bg-[#8bc1d2] pl-[3px] leading-[20px]">{r.label}</span>
                  : <span className={r.gap}>{r.label}</span>
              )}
            </div>
            <div className={clsx("flex w-[50px] items-center pl-[5px] border-r-2 border-white", r.sel && "bg-[#8bc1d2]")}>
              {r.done && <Check />}
            </div>
            <div className={clsx("flex flex-1 items-center pl-[4px] text-[12px] text-[#222]", r.sel && "bg-[#8bc1d2]")}>{r.tool}</div>
          </div>
        ))}
        <span className="absolute left-[199px] top-0 bottom-0 w-[1px] bg-black" />
        <svg className="absolute left-0 top-0 w-[130px] h-[200px] pointer-events-none">
          <path d="M9.500 29V171M9.500 29.500H18M29.500 57V66M47.500 75V110M47.500 90.500H58M47.500 110.500H58M14 49.500H19M33 69.500H38M14 131.500H19M14 151.500H19M14 171.500H19" stroke="#8a8a8a" strokeDasharray="1 1" fill="none" />
        </svg>
      </div>
    </div>
  </div>
);

/* ---------- 3D viewport ---------- */

const Hole = ({ cx, cy }: { cx: number; cy: number }) => (
  <g>
    <ellipse cx={cx} cy={cy} rx="42" ry="19" fill="#f0ffff" stroke="#333" strokeWidth="1" />
    <ellipse cx={cx} cy={cy + 1} rx="38" ry="16" fill="#7f8d86" stroke="#555" strokeWidth="1" />
    <path d={`M${cx - 27} ${cy - 3}A27 10 0 0 1 ${cx + 27} ${cy - 3}V${cy + 12}Q${cx} ${cy + 23} ${cx - 27} ${cy + 12}Z`} fill="#00ffff" />
    <circle cx={cx - 4} cy={cy + 2} r="4.500" fill="none" stroke="#f08a1c" strokeWidth="1" />
    <path d={`M${cx - 4} ${cy + 5}q10 9 24 5M${cx + 4} ${cy + 6}l8 2`} fill="none" stroke="#f5c518" strokeWidth="1.600" />
  </g>
);

const Logo = () => (
  <g>
    <path d="M1637 851L1679 874V922L1637 945L1595 922V874Z" fill="#3c96bf" stroke="#d8d8d8" strokeWidth="2.500" />
    <path d="M1637 851C1650 866 1661 878 1663 902L1637 885L1614 897L1612 912L1596 922V874Z" fill="#336ea5" />
    <path d="M1612 912C1612 930 1625 938 1637 945L1596 922Z" fill="#336ea5" />
    <path d="M1637 866L1663 880V915L1637 929L1612 915V880Z" fill="#336ea5" stroke="#dcdcdc" strokeWidth="4" />
    <path d="M1637 897L1663 880V915L1637 929Z" fill="#3c96bf" />
    <path d="M1637 897V929M1612 880L1637 897L1663 880" stroke="#9fc6da" strokeWidth="0.8" fill="none" />
    <text
      x="1687"
      y="908"
      fontSize="47"
      fontWeight="700"
      fill="#3b97c1"
      stroke="#dadada"
      strokeWidth="3"
      paintOrder="stroke"
      textLength="200"
      lengthAdjust="spacingAndGlyphs"
      fontFamily="'Noto Sans CJK SC', sans-serif"
    >
      3D世界网
    </text>
    <text
      x="1689"
      y="928"
      fontSize="15"
      fontWeight="700"
      fill="#3b97c1"
      stroke="#dadada"
      strokeWidth="2"
      paintOrder="stroke"
      textLength="196"
      lengthAdjust="spacing"
      fontFamily="'DejaVu Sans', sans-serif"
    >
      WWW.3DSJW.COM
    </text>
  </g>
);

const Model = () => (
  <svg viewBox="362 145 1534 807" className="absolute inset-0 w-full h-full">
    <polygon points="794,590 923,434 1018,448 960,515 1023,627 925,640" fill="#f0ffff" stroke="#222" />
    <polygon points="794,590 792,762 1152,820 1152,649 1023,627 1023,600 925,600 837,597" fill="#656f69" stroke="#222" />
    <polygon points="1056,404 1150,419 1023,573 930,560" fill="#f0ffff" stroke="#222" />
    <polygon points="1150,419 1150,471 1023,625 1023,573" fill="#9aaca1" stroke="#222" />
    <polygon points="1150,471 1280,492 1152,649 1023,627" fill="#f0ffff" stroke="#222" />
    <polygon points="1280,492 1280,684 1152,820 1152,649" fill="#9aaca1" stroke="#222" />
    <Hole cx={966} cy={475} />
    <Hole cx={1184} cy={511} />
    <Hole cx={1107} cy={606} />
    <text x="944" y="477" fontSize="11" fill="#36c9b5" fontFamily="'Liberation Serif', serif">YM</text>
    <text x="907" y="428" fontSize="12" fill="#2233cc" fontFamily="'Liberation Serif', serif">ZM</text>
    <path d="M925 482V445" stroke="#0b3fc0" strokeWidth="1.500" />
    <path d="M925 428l-3.500 20h7z" fill="#0b3fc0" />
    <path d="M969 356L968 475M1185 391L1184 512M1107 485V606M892 451V485" stroke="#0000ff" strokeWidth="2.200" />
    <path d="M892 451L1107 485L1185 391L969 356" stroke="#ff0000" strokeWidth="2.200" fill="none" />
    <Logo />
  </svg>
);

const InfoDialog = () => (
  <div className="absolute left-[476px] top-[335px] flex h-[131px] w-[243px] flex-col bg-[#f0f0f0] border-r border-b border-[#a5a5a5]">
    <div className="relative flex h-[28px] items-center bg-[#56a0ba] pl-[56px] text-[13px] text-white">
      提示:
      <svg viewBox="0 0 60 26" className="absolute -left-[5px] top-0 w-[60px] h-[26px]">
        <path d="M2 2c6 3 8 8 12 12 8 6 28 10 42 4M5 1c5 8 10 14 18 20 8 3 18 4 28 1M9 3c6 4 8 10 16 14 9 4 20 3 30-3M18 5c8 2 14 4 22 7 4 1 8 1 12 0M14 9c8 2 14 8 24 7M24 9c6 5 14 7 24 8M30 13c-4 2-6 4-6 7M38 11c-2 3-4 6-3 10M46 12c-2 3-3 6-2 9" stroke="#ed1c24" strokeWidth="2.600" fill="none" />
      </svg>
    </div>
    <div className="flex flex-1 flex-col">
      <div className="flex pt-[7px]">
        <svg viewBox="0 0 32 32" className="ml-[15px] mt-[1px] h-[31px] w-[31px] shrink-0">
          <defs>
            <linearGradient id="infoBlue" x1="0" y1="0" x2="0" y2="1">
              <stop offset="0" stopColor="#6a93d8" />
              <stop offset="0.5" stopColor="#2f57b8" />
              <stop offset="1" stopColor="#1a3aa8" />
            </linearGradient>
          </defs>
          <circle cx="16" cy="16" r="15" fill="#eee" stroke="#888" strokeWidth="1" />
          <circle cx="16" cy="16" r="13" fill="url(#infoBlue)" />
          <rect x="14.500" y="14" width="3.500" height="12" fill="#e5e5e5" />
          <circle cx="16" cy="9.500" r="2" fill="#e5e5e5" />
        </svg>
        <div className="ml-[13px] text-[12px] leading-[17px] text-[#222] whitespace-pre">
          <div>刀具名称:D6_3,</div>
          <div>刀具号 ( T ) 设置错误!</div>
          <div>正确值为大于0小于25.</div>
        </div>
      </div>
      <div className="mx-auto mt-[8px] flex h-[25px] w-[63px] items-center justify-center bg-[#72a9bf] p-[2px]">
        <span className="flex h-full w-full items-center justify-center border border-dotted border-black text-[12px] text-white">
          确定(<u>O</u>)
        </span>
      </div>
    </div>
  </div>
);

const Viewport = () => (
  <div className="relative flex-1 bg-gradient-to-b from-[#222326] to-[#58595b] overflow-hidden">
    <Model />
    <InfoDialog />
  </div>
);

export default function App() {
  return (
    <div className="flex h-[952px] w-[1896px] flex-col overflow-hidden bg-white font-['Noto_Sans','Noto_Sans_CJK_SC',sans-serif]">
      <TopBar />
      <Ribbon />
      <Toolbar />
      <div className="flex flex-1 min-h-0 border-t-2 border-[#8f8f8f]">
        <Rail />
        <Navigator />
        <Viewport />
      </div>
    </div>
  );
}
